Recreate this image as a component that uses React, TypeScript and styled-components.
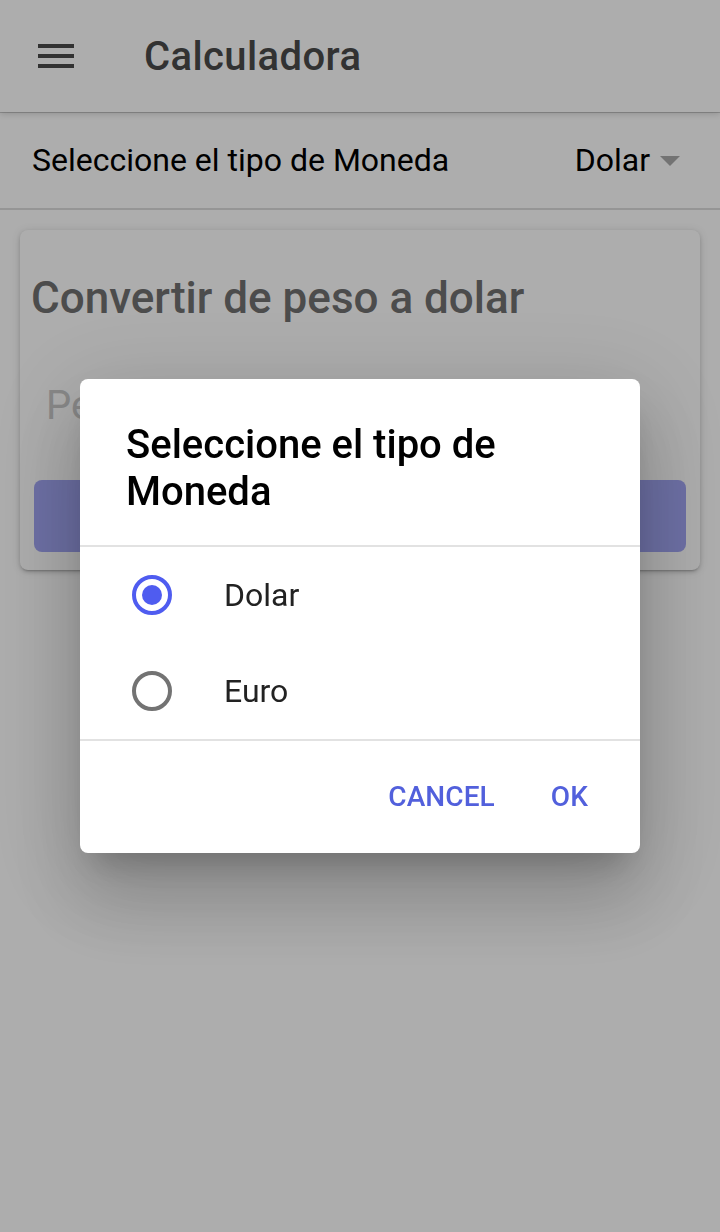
import React from "react";
import styled, { createGlobalStyle } from "styled-components";

const Global = createGlobalStyle`
  html, body { margin: 0; padding: 0; background: #fff; }
  body { font-family: Roboto, "Noto Sans", "Liberation Sans", sans-serif; -webkit-font-smoothing: antialiased; }
  * { box-sizing: border-box; }
`;

const Page = styled.div`
  width: 720px;
  height: 1232px;
  background: #fff;
  display: flex;
  flex-direction: column;
  overflow: hidden;
`;

const Header = styled.header`
  height: 112px;
  display: flex;
  align-items: center;
  padding-left: 38px;
  background: #fff;
  position: relative;
  box-shadow: 0 1px 0 rgba(0,0,0,0.18), 0 2px 6px rgba(0,0,0,0.16);
  z-index: 1;
`;

const MenuIcon = styled.div`
  width: 36px;
  height: 24px;
  display: flex;
  flex-direction: column;
  justify-content: space-between;
  margin-right: 70px;
  span { display: block; height: 4px; background: #4a4a4a; }
`;

const Title = styled.h1`
  margin: 0;
  font-size: 40px;
  font-weight: 500;
  color: #4a4a4a;
  letter-spacing: 0.4px;
`;

const SelectItem = styled.div`
  height: 98px;
  display: flex;
  align-items: center;
  justify-content: space-between;
  padding: 0 40px 0 32px;
  border-bottom: 2px solid #dcdcdc;
  font-size: 32px;
  color: #000;
`;

const SelectValue = styled.div`
  display: flex;
  align-items: center;
  gap: 10px;
`;

const Caret = styled.span`
  width: 0;
  height: 0;
  border-left: 10px solid transparent;
  border-right: 10px solid transparent;
  border-top: 10px solid #aaa;
  margin-top: 2px;
`;

const Card = styled.section`
  margin: 20px 20px 0;
  height: 340px;
  border-radius: 8px;
  background: #fff;
  box-shadow: 0 3px 2px -2px rgba(0,0,0,0.2), 0 2px 4px 0 rgba(0,0,0,0.14), 0 1px 10px 0 rgba(0,0,0,0.12);
  padding: 40px 14px 0;
  display: flex;
  flex-direction: column;
`;

const CardTitle = styled.h2`
  margin: 0 0 0 -3px;
  font-size: 44px;
  font-weight: 500;
  color: #707070;
  line-height: 56px;
`;

const Input = styled.div`
  margin-top: 56px;
  padding-left: 12px;
  font-size: 40px;
  color: #c9c9c9;
  line-height: 48px;
`;

const Button = styled.div`
  margin-top: 50px;
  height: 72px;
  border-radius: 8px;
  background: #a2a6f4;
`;

const Backdrop = styled.div`
  position: fixed;
  inset: 0;
  background: rgba(0,0,0,0.32);
  display: flex;
  align-items: center;
  justify-content: center;
  z-index: 10;
`;

const Dialog = styled.div`
  width: 560px;
  background: #fff;
  border-radius: 8px;
  box-shadow: 0 22px 30px -14px rgba(0,0,0,0.2), 0 48px 76px 6px rgba(0,0,0,0.14), 0 18px 92px 16px rgba(0,0,0,0.12);
  display: flex;
  flex-direction: column;
`;

const DialogHead = styled.div`
  padding: 42px 46px 30px;
  font-size: 40px;
  font-weight: 500;
  line-height: 47px;
  color: #000;
  border-bottom: 2px solid #e2e2e2;
`;

const RadioList = styled.div`
  display: flex;
  flex-direction: column;
  border-bottom: 2px solid #e2e2e2;
`;

const RadioRow = styled.div`
  height: 96px;
  display: flex;
  align-items: center;
  padding-left: 52px;
  font-size: 32px;
  color: #222;
`;

const RadioCircle = styled.span<{ $checked?: boolean }>`
  width: 40px;
  height: 40px;
  border-radius: 50%;
  border: 4px solid ${(p) => (p.$checked ? "#4f5cf0" : "#737373")};
  display: flex;
  align-items: center;
  justify-content: center;
  margin-right: 52px;
  &::after {
    content: "";
    width: 20px;
    height: 20px;
    border-radius: 50%;
    background: ${(p) => (p.$checked ? "#4f5cf0" : "transparent")};
  }
`;

const Actions = styled.div`
  display: flex;
  justify-content: flex-end;
  padding: 19px 16px 21px;
`;

const ActionButton = styled.div`
  height: 72px;
  display: flex;
  align-items: center;
  padding: 0 20px;
  margin-right: 16px;
  font-size: 28px;
  font-weight: 500;
  color: #5260dc;
  letter-spacing: 0.1px;
`;

export default function App() {
  return (
    <>
      <Global />
      <Page>
        <Header>
          <MenuIcon>
            <span />
            <span />
            <span />
          </MenuIcon>
          <Title>Calculadora</Title>
        </Header>
        <SelectItem>
          <span>Seleccione el tipo de Moneda</span>
          <SelectValue>
            <span>Dolar</span>
            <Caret />
          </SelectValue>
        </SelectItem>
        <Card>
          <CardTitle>Convertir de peso a dolar</CardTitle>
          <Input>Peso</Input>
          <Button />
        </Card>
      </Page>
      <Backdrop>
        <Dialog>
          <DialogHead>
            Seleccione el tipo de
            <br />
            Moneda
          </DialogHead>
          <RadioList>
            <RadioRow>
              <RadioCircle $checked />
              Dolar
            </RadioRow>
            <RadioRow>
              <RadioCircle />
              Euro
            </RadioRow>
          </RadioList>
          <Actions>
            <ActionButton>CANCEL</ActionButton>
            <ActionButton>OK</ActionButton>
          </Actions>
        </Dialog>
      </Backdrop>
    </>
  );
}
